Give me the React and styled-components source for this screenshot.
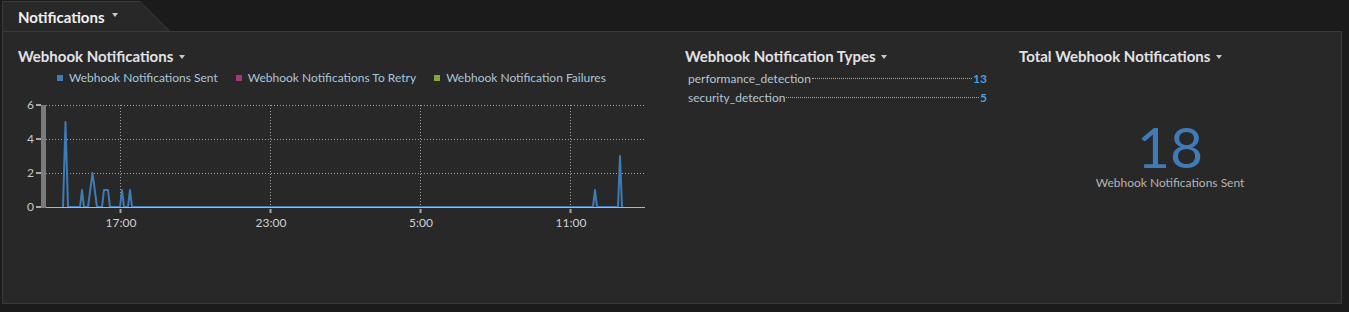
import React from 'react'
import styled, { createGlobalStyle } from 'styled-components'

const GlobalStyle = createGlobalStyle`
    body {
        margin: 0;
        background: #1b1b1b;
        font-family: Lato, "Open Sans", sans-serif;
    }
`

const series = [
    [63, 0], [65.5, 5], [68, 0],
    [80, 0], [82, 1], [84, 0],
    [88, 0], [92.5, 2], [97, 0],
    [102, 0], [104, 1], [108, 1], [110, 0],
    [120, 0], [122, 1], [124, 0],
    [128, 0], [130, 1], [132, 0],
    [593, 0], [595, 1], [597, 0],
    [618, 0], [620, 3], [622, 0],
]

const legend = [
    { label: 'Webhook Notifications Sent', color: '#3f7bb6' },
    { label: 'Webhook Notifications To Retry', color: '#a8357f' },
    { label: 'Webhook Notification Failures', color: '#7fa838' },
]

const types = [
    { name: 'performance_detection', count: 13 },
    { name: 'security_detection', count: 5 },
]

const Caret = () => <SCaret />

const Chart = () => {
    const y0 = 111
    const unit = 17
    const pts = series.map(([x, v]) => `${x - 18},${y0 - v * unit}`).join(' ')
    const xs = [{ x: 102, t: '17:00' }, { x: 252, t: '23:00' }, { x: 402, t: '5:00' }, { x: 552, t: '11:00' }]
    return (
        <SChart width="640" height="140">
            {[0, 2, 4, 6].map((v) => (
                <g key={v}>
                    <text x="16" y={y0 - v * unit + 4} textAnchor="end" fontSize="12" fill="#c8c8c8" fontFamily="Lato, sans-serif">{v}</text>
                    <line x1="18" x2="23" y1={y0 - v * unit} y2={y0 - v * unit} stroke="#a8a8a8" strokeWidth="2" />
                    {v > 0 && <line x1="28" x2="627" y1={y0 - v * unit + 0.5} y2={y0 - v * unit + 0.5} stroke="#a0a0a0" strokeDasharray="1 2" />}
                </g>
            ))}
            <rect x="23" y="9" width="5" height="103" fill="#7b7b7b" />
            {xs.map((d) => (
                <g key={d.t}>
                    <line x1={d.x + 0.5} x2={d.x + 0.5} y1="9" y2={y0} stroke="#a0a0a0" strokeDasharray="1 2" />
                    <line x1={d.x + 0.5} x2={d.x + 0.5} y1="113" y2="117" stroke="#a8a8a8" strokeWidth="2" />
                    <text x={d.x + 1} y="131" textAnchor="middle" fontSize="12" fill="#d0d0d0" fontFamily="Lato, sans-serif">{d.t}</text>
                </g>
            ))}
            <polyline points={pts} fill="none" stroke="#3f7bb6" strokeWidth="2" strokeLinejoin="round" />
            <line x1="28" x2="627" y1={y0 + 0.5} y2={y0 + 0.5} stroke="#b4b4b4" />
        </SChart>
    )
}

const App = () => {
    return (
        <SPage>
            <GlobalStyle />
            <STab>
                <STabInner>
                    <STabTitle>Notifications</STabTitle>
                    <Caret />
                </STabInner>
            </STab>
            <SPanel>
                <SColumn>
                    <STitle>Webhook Notifications <Caret /></STitle>
                    <SLegend>
                        {legend.map((l) => (
                            <SLegendItem key={l.label}>
                                <SSwatch $color={l.color} />
                                {l.label}
                            </SLegendItem>
                        ))}
                    </SLegend>
                    <Chart />
                </SColumn>
                <SColumn>
                    <STitle>Webhook Notification Types <Caret /></STitle>
                    <SList>
                        {types.map((t) => (
                            <SRow key={t.name}>
                                <span>{t.name}</span>
                                <SLeader />
                                <SCount>{t.count}</SCount>
                            </SRow>
                        ))}
                    </SList>
                </SColumn>
                <SColumn>
                    <STitle>Total Webhook Notifications <Caret /></STitle>
                    <STotal>
                        <SBigNumber>18</SBigNumber>
                        <SCaption>Webhook Notifications Sent</SCaption>
                    </STotal>
                </SColumn>
            </SPanel>
        </SPage>
    )
}

export default App

const SPage = styled.div`
    padding: 1px 7px 8px 2px;
`

const STab = styled.div`
    width: 168px;
    height: 30px;
    background: #3a3a3a;
    clip-path: polygon(0 0, 138px 0, 168px 30px, 0 30px);
    padding: 1px 0 0 1px;
    box-sizing: border-box;
`

const STabInner = styled.div`
    height: 100%;
    display: flex;
    align-items: center;
    gap: 5px;
    padding-left: 15px;
    background: #282828;
    clip-path: polygon(0 0, 137px 0, 166px 29px, 0 29px);
`

const STabTitle = styled.span`
    font-size: 15px;
    font-weight: 700;
    color: #f0f0f0;
`

const SCaret = styled.span`
    display: inline-block;
    width: 0;
    height: 0;
    border-left: 3.5px solid transparent;
    border-right: 3.5px solid transparent;
    border-top: 4px solid #c8c8c8;
    vertical-align: middle;
    margin-left: 2px;
    margin-bottom: 3px;
`

const SPanel = styled.div`
    display: grid;
    grid-template-columns: 667px 334px 302px;
    height: 273px;
    box-sizing: border-box;
    padding: 14px 0 0 15px;
    background: #282828;
    border: 1px solid #3a3a3a;
`

const SColumn = styled.div`
    display: flex;
    flex-direction: column;
`

const STitle = styled.div`
    font-size: 15px;
    font-weight: 700;
    line-height: 20px;
    color: #e2e2e6;
`

const SLegend = styled.div`
    display: flex;
    gap: 18px;
    margin: 4px 0 0 39px;
    font-size: 12px;
    line-height: 16px;
    color: #a9c6d8;
`

const SLegendItem = styled.div`
    display: flex;
    align-items: center;
    gap: 6px;
`

const SSwatch = styled.span`
    width: 6px;
    height: 6px;
    background: ${(p) => p.$color};
`

const SChart = styled.svg`
    display: block;
    margin-top: 10px;
`

const SList = styled.div`
    display: flex;
    flex-direction: column;
    width: 299px;
    margin: 3px 0 0 3px;
    font-size: 12px;
    line-height: 19px;
    color: #b2c7d4;
`

const SRow = styled.div`
    display: flex;
    align-items: baseline;
`

const SLeader = styled.span`
    flex: 1;
    border-bottom: 1px dotted #a8a8a8;
    margin: 0 1px;
    transform: translateY(-4px);
`

const SCount = styled.span`
    font-weight: 700;
    color: #4c9ede;
`

const STotal = styled.div`
    display: flex;
    flex-direction: column;
    align-items: center;
    margin-top: 55px;
`

const SBigNumber = styled.div`
    font-size: 57px;
    line-height: 50px;
    color: #3f7bb6;
`

const SCaption = styled.div`
    margin-top: 5px;
    font-size: 12px;
    line-height: 14px;
    color: #b4b4b4;
`
